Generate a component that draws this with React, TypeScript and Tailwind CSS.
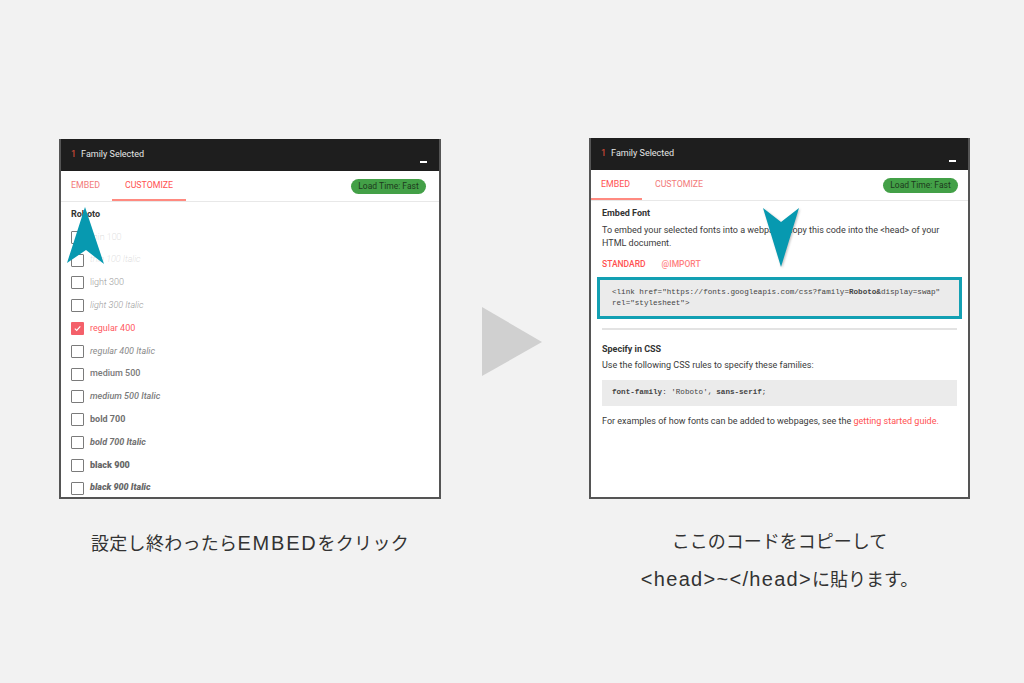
import React from "react";

const weights: { label: string; cls: string; box?: boolean }[] = [
  { label: "thin 100", cls: "font-thin text-[#c4c4c4]" },
  { label: "thin 100 Italic", cls: "font-thin italic text-[#c4c4c4]" },
  { label: "light 300", cls: "font-light text-[#9a9a9a]" },
  { label: "light 300 Italic", cls: "font-light italic text-[#9a9a9a]" },
  { label: "regular 400", cls: "font-normal text-[#ff5a5f]", box: true },
  { label: "regular 400 Italic", cls: "font-normal italic text-[#8a8a8a]" },
  { label: "medium 500", cls: "font-medium text-[#7a7a7a]" },
  { label: "medium 500 Italic", cls: "font-medium italic text-[#7a7a7a]" },
  { label: "bold 700", cls: "font-bold text-[#707070]" },
  { label: "bold 700 Italic", cls: "font-bold italic text-[#707070]" },
  { label: "black 900", cls: "font-black text-[#666666]" },
  { label: "black 900 Italic", cls: "font-black italic text-[#666666]" },
];

function Header() {
  return (
    <div className="relative flex h-[32px] shrink-0 items-center bg-[#1e1e1e] pl-[10px] text-[9px]">
      <span className="text-[#e8553d]">1</span>
      <span className="ml-[5px] text-[#e6e6e6]">Family Selected</span>
      <div className="absolute bottom-[8px] right-[12px] h-[2px] w-[7px] bg-white" />
    </div>
  );
}

function Tabs({ active, right }: { active: "embed" | "customize"; right: string }) {
  const on = "text-[#ff5252] border-[#ff8a80]";
  const off = "text-[#f27a7a] border-transparent";
  return (
    <div className={`flex h-[31px] shrink-0 items-stretch border-b border-[#e8e8e8] ${right}`}>
      <div
        className={`flex items-center border-b-2 pl-[10px] pr-[12px] pt-[2px] text-[8.8px] ${
          active === "embed" ? on : off
        }`}
      >
        EMBED
      </div>
      <div
        className={`flex items-center border-b-2 px-[13px] pt-[2px] text-[8.8px] ${
          active === "customize" ? on : off
        }`}
      >
        CUSTOMIZE
      </div>
      <div className="ml-auto flex items-center">
        <div className="flex h-[15px] w-[75px] items-center justify-center rounded-full bg-[#43a047] text-[8.5px] text-[#1d3a1d]">
          Load Time: Fast
        </div>
      </div>
    </div>
  );
}

function Checkbox({ checked }: { checked?: boolean }) {
  if (checked) {
    return (
      <div className="flex h-[13px] w-[13px] items-center justify-center rounded-[1px] bg-[#f4606a]">
        <svg width="9" height="9" viewBox="0 0 9 9">
          <path d="M1.8 4.6 L3.7 6.4 L7.3 2.4" fill="none" stroke="white" strokeWidth="1.1" />
        </svg>
      </div>
    );
  }
  return <div className="h-[13px] w-[13px] rounded-[1px] border-[1.5px] border-[#7b7b7b]" />;
}

function LeftPanel() {
  return (
    <div className="relative flex h-[360px] w-[382px] flex-col overflow-hidden border-2 border-t-0 border-[#555] bg-white font-['Roboto']">
      <div className="h-[2px] bg-[#3a3a3a]" />
      <Header />
      <Tabs active="customize" right="pr-[13px]" />
      <div className="flex flex-col pl-[10px] pt-[2px]">
        <div className="flex h-[22px] items-center text-[9px] font-bold text-[#333]">Roboto</div>
        {weights.map((w) => (
          <div key={w.label} className="flex h-[22.8px] items-center">
            <Checkbox checked={w.box} />
            <span className={`ml-[6px] text-[9px] ${w.cls}`}>{w.label}</span>
          </div>
        ))}
      </div>
      <svg className="absolute left-[0px] top-[0px]" width="60" height="140" viewBox="0 0 60 140">
        <polygon points="24,68 43,125 25,111 6,124" fill="#0799b0" />
      </svg>
    </div>
  );
}

function RightPanel() {
  return (
    <div className="relative flex h-[361px] w-[381px] flex-col overflow-hidden border-2 border-t-0 border-[#555] bg-white font-['Roboto'] text-[9px] text-[#3a3a3a]">
      <Header />
      <Tabs active="embed" right="pr-[10px]" />
      <div className="flex flex-col px-[11px] pt-[7px]">
        <div className="flex h-[12px] items-center font-bold text-[#333]">Embed Font</div>
        <p className="mt-[4px] leading-[13px]">
          To embed your selected fonts into a webpage, copy this code into the &lt;head&gt; of your
          <br />
          HTML document.
        </p>
        <div className="mt-[8px] flex h-[12px] items-center text-[8.5px] font-medium">
          <span className="text-[#ff5252]">STANDARD</span>
          <span className="ml-[16px] text-[#ff8080]">@IMPORT</span>
        </div>
        <div className="-mx-[5px] mt-[7px] border-[3px] border-[#13a0b3] bg-[#ebebeb] px-[12px] py-[7px] font-['Liberation_Mono',monospace] text-[7.6px] leading-[11px] text-[#444]">
          &lt;link href="https://fonts.googleapis.com/css?family=<b>Roboto&amp;</b>display=swap"
          <br />
          rel="stylesheet"&gt;
        </div>
        <div className="mt-[9px] h-[1.5px] bg-[#e3e3e3]" />
        <div className="mt-[14px] flex h-[12px] items-center font-bold text-[#333]">Specify in CSS</div>
        <div className="mt-[4px] flex h-[12px] items-center">Use the following CSS rules to specify these families:</div>
        <div className="mt-[8px] flex h-[26px] items-center bg-[#ebebeb] px-[10px] font-['Liberation_Mono',monospace] text-[7.6px] text-[#444]">
          <span className="font-bold">font-family</span>
          <span>: 'Roboto', </span>
          <span className="ml-[4px] font-bold">sans-serif</span>
          <span>;</span>
        </div>
        <div className="mt-[10px] flex h-[12px] items-center">
          For examples of how fonts can be added to webpages, see the&nbsp;
          <span className="text-[#ff5252]">getting started guide.</span>
        </div>
      </div>
      <svg
        className="absolute left-[160px] top-[60px] drop-shadow-[1px_1px_1px_rgba(0,0,0,0.25)]"
        width="60"
        height="80"
        viewBox="160 60 60 80"
      >
        <polygon points="172,70 190,84 208,70 190,129" fill="#0799b0" />
      </svg>
    </div>
  );
}

export default function App() {
  return (
    <div className="h-[683px] w-[1024px] overflow-hidden bg-[#f2f2f2]">
      <div className="flex pl-[59px] pt-[139px]">
        <div className="flex w-[382px] flex-col items-center">
          <LeftPanel />
          <div className="mt-[24px] font-['Noto_Sans_CJK_JP',sans-serif] text-[18px] leading-[38px] tracking-[0.3px] text-[#333]">
            設定し終わったら
            <span className="font-['Liberation_Sans',sans-serif] text-[20px] tracking-[1.8px]">EMBED</span>
            をクリック
          </div>
        </div>
        <svg className="ml-[41px] mt-[168px] shrink-0" width="60" height="69" viewBox="0 0 60 69">
          <polygon points="0,0 60,35 0,69" fill="#d0d0d0" />
        </svg>
        <div className="-mt-px ml-[47px] flex w-[381px] flex-col items-center">
          <RightPanel />
          <div className="mt-[22px] text-center font-['Noto_Sans_CJK_JP',sans-serif] text-[18px] leading-[38px] text-[#333]">
            ここのコードをコピーして
            <br />
            <span className="font-['Liberation_Sans',sans-serif] text-[20px] tracking-[1.3px]">
              &lt;head&gt;~&lt;/head&gt;
            </span>
            に貼ります。
          </div>
        </div>
      </div>
    </div>
  );
}
